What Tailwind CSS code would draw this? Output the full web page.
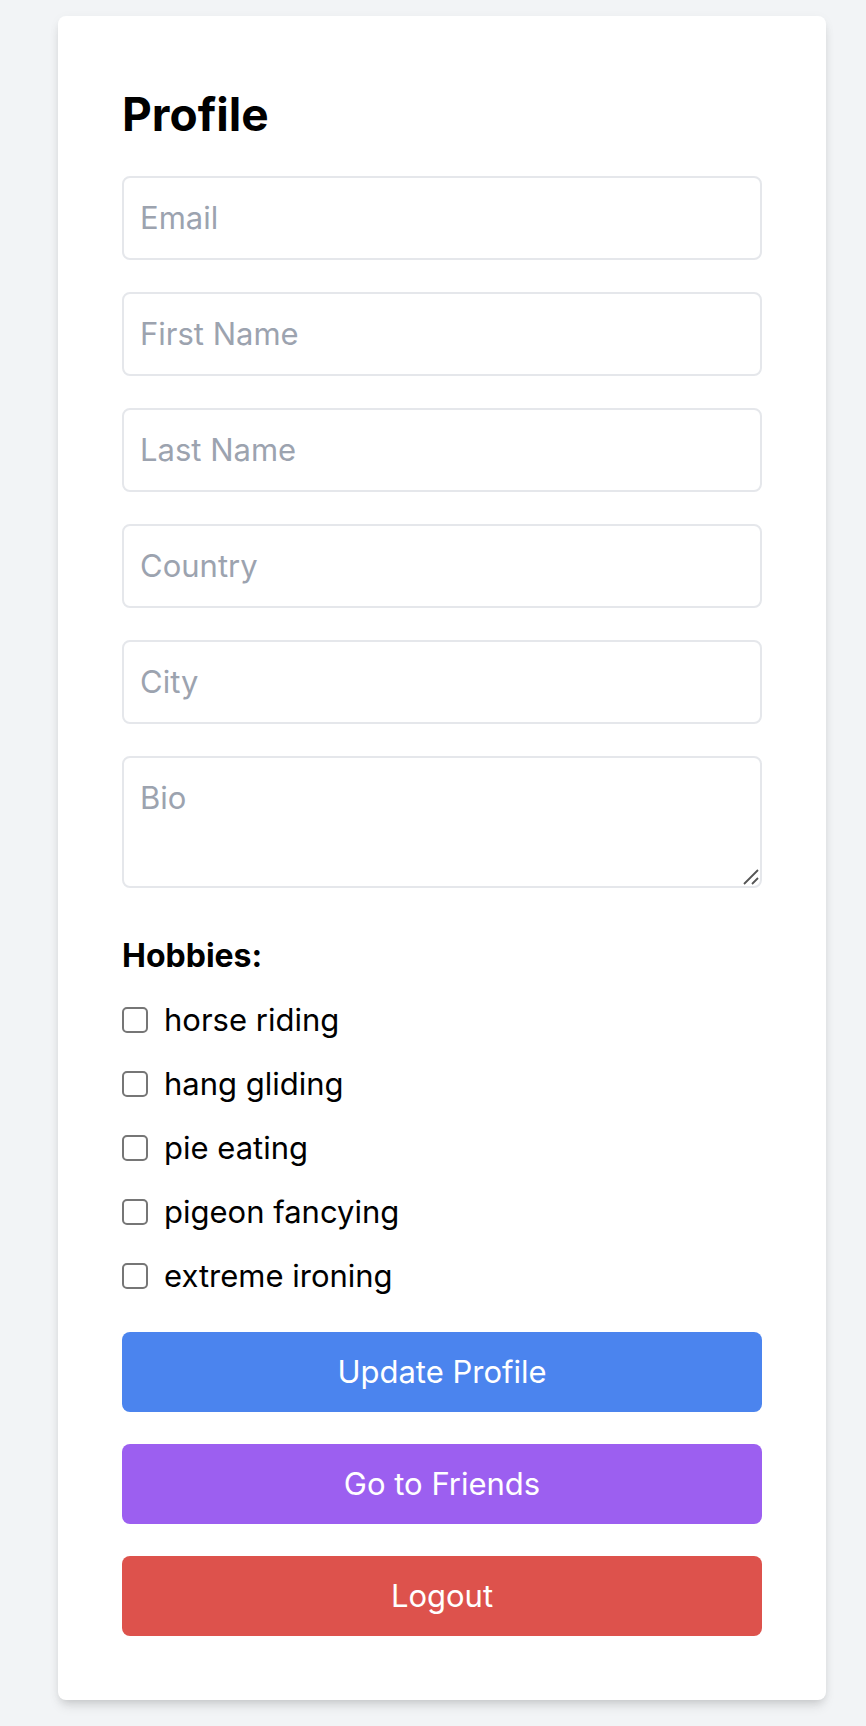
<!DOCTYPE html>
<html lang="en">
<head>
<meta charset="utf-8">
<meta name="viewport" content="width=device-width, initial-scale=1">
<title>Profile</title>
<script src="https://cdn.jsdelivr.net/npm/@tailwindcss/browser@4"></script>
</head>
<body class="min-h-screen bg-[#f2f4f6] pt-4 pr-10 pb-6 pl-[58px] font-['Inter','Liberation_Sans',sans-serif] text-[31px] leading-12 text-black">
<main class="mx-auto max-w-3xl rounded-lg bg-white p-16 shadow-[0_8px_12px_-2px_rgba(0,0,0,0.1),0_4px_8px_-4px_rgba(0,0,0,0.1),0_2px_12px_rgba(0,0,0,0.04)]">
  <h1 class="mb-7 text-[46px] leading-17 font-bold">Profile</h1>
  <form>
    <div class="flex flex-col gap-8">
      <input type="email" aria-label="Email" placeholder="Email" class="w-full rounded-lg border-2 border-[#e5e7eb] p-4 leading-12 placeholder:text-[#9ca3af]">
      <input type="text" aria-label="First Name" placeholder="First Name" class="w-full rounded-lg border-2 border-[#e5e7eb] p-4 leading-12 placeholder:text-[#9ca3af]">
      <input type="text" aria-label="Last Name" placeholder="Last Name" class="w-full rounded-lg border-2 border-[#e5e7eb] p-4 leading-12 placeholder:text-[#9ca3af]">
      <input type="text" aria-label="Country" placeholder="Country" class="w-full rounded-lg border-2 border-[#e5e7eb] p-4 leading-12 placeholder:text-[#9ca3af]">
      <input type="text" aria-label="City" placeholder="City" class="w-full rounded-lg border-2 border-[#e5e7eb] p-4 leading-12 placeholder:text-[#9ca3af]">
      <div class="relative">
        <textarea aria-label="Bio" rows="2" placeholder="Bio" class="block w-full resize-none rounded-lg border-2 border-[#e5e7eb] p-4 leading-12 placeholder:text-[#9ca3af]"></textarea>
        <svg class="pointer-events-none absolute right-[3px] bottom-[3px] size-4" viewBox="0 0 16 16" fill="none" stroke="#555" stroke-width="1.8" aria-hidden="true"><path d="M1 15 15 1M9 15l6-6"/></svg>
      </div>
    </div>
    <fieldset class="mt-11 mb-8">
      <legend class="mb-4 text-[32px] leading-12 font-bold">Hobbies:</legend>
      <div class="flex flex-col gap-4">
        <label class="flex items-center gap-4"><input type="checkbox" class="size-[26px] shrink-0 appearance-none rounded-[5px] border-2 border-[#767676] bg-white checked:bg-[#0075ff]">horse riding</label>
        <label class="flex items-center gap-4"><input type="checkbox" class="size-[26px] shrink-0 appearance-none rounded-[5px] border-2 border-[#767676] bg-white checked:bg-[#0075ff]">hang gliding</label>
        <label class="flex items-center gap-4"><input type="checkbox" class="size-[26px] shrink-0 appearance-none rounded-[5px] border-2 border-[#767676] bg-white checked:bg-[#0075ff]">pie eating</label>
        <label class="flex items-center gap-4"><input type="checkbox" class="size-[26px] shrink-0 appearance-none rounded-[5px] border-2 border-[#767676] bg-white checked:bg-[#0075ff]">pigeon fancying</label>
        <label class="flex items-center gap-4"><input type="checkbox" class="size-[26px] shrink-0 appearance-none rounded-[5px] border-2 border-[#767676] bg-white checked:bg-[#0075ff]">extreme ironing</label>
      </div>
    </fieldset>
    <div class="flex flex-col gap-8">
      <button type="submit" class="w-full rounded-lg bg-[#4b84ee] p-4 text-white">Update Profile</button>
      <button type="button" class="w-full rounded-lg bg-[#9c5ff0] p-4 text-white">Go to Friends</button>
      <button type="button" class="w-full rounded-lg bg-[#dd524c] p-4 text-white">Logout</button>
    </div>
  </form>
</main>
</body>
</html>
